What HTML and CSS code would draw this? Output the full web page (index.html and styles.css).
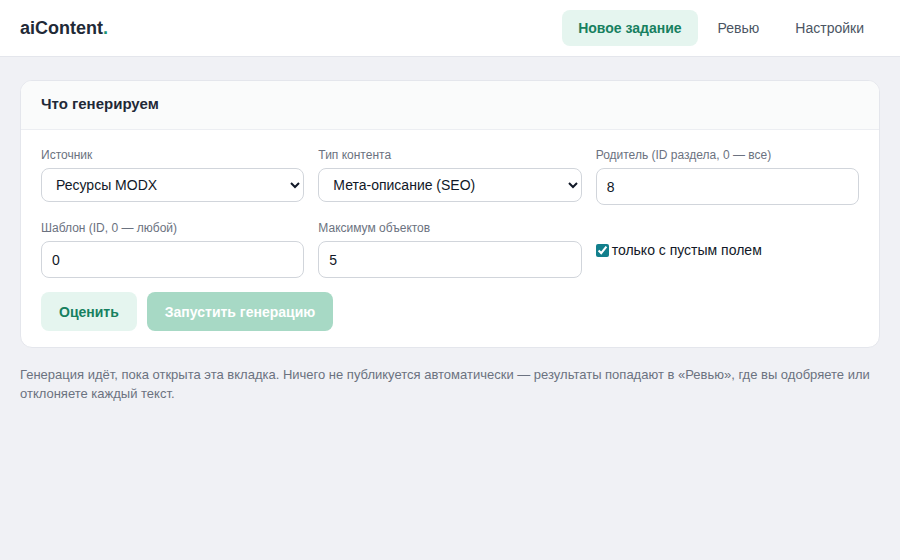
FILE: index.html
```html
<!DOCTYPE html>
<html lang="ru">
<head>
    <meta charset="UTF-8">
    <title>aiContent — Новое задание</title>
    <link rel="stylesheet" href="styles.css">
</head>
<body>
    <header class="topbar">
        <div class="logo">aiContent<span class="logo-dot">.</span></div>
        <nav class="nav">
            <a class="nav-item active" href="#">Новое задание</a>
            <a class="nav-item" href="#">Ревью</a>
            <a class="nav-item" href="#">Настройки</a>
        </nav>
    </header>

    <main class="page">
        <section class="card">
            <div class="card-head">Что генерируем</div>
            <div class="card-body">
                <div class="grid">
                    <div class="field">
                        <label for="source">Источник</label>
                        <select id="source">
                            <option>Ресурсы MODX</option>
                        </select>
                    </div>
                    <div class="field">
                        <label for="type">Тип контента</label>
                        <select id="type">
                            <option>Мета-описание (SEO)</option>
                        </select>
                    </div>
                    <div class="field">
                        <label for="parent">Родитель (ID раздела, 0 — все)</label>
                        <input type="text" id="parent" value="8">
                    </div>
                    <div class="field">
                        <label for="template">Шаблон (ID, 0 — любой)</label>
                        <input type="text" id="template" value="0">
                    </div>
                    <div class="field">
                        <label for="limit">Максимум объектов</label>
                        <input type="text" id="limit" value="5">
                    </div>
                    <div class="field check-field">
                        <label class="check"><input type="checkbox" checked>только с пустым полем</label>
                    </div>
                </div>
                <div class="actions">
                    <button class="btn btn-soft">Оценить</button>
                    <button class="btn btn-primary" disabled>Запустить генерацию</button>
                </div>
            </div>
        </section>

        <p class="hint">Генерация идёт, пока открыта эта вкладка. Ничего не публикуется автоматически — результаты попадают в «Ревью», где вы одобряете или отклоняете каждый текст.</p>
    </main>
</body>
</html>
```

FILE: styles.css
```css
body {
    margin: 0;
    font-family: "Liberation Sans", Arial, sans-serif;
    background: #f0f1f5;
    color: #1f2937;
}

.topbar {
    height: 56px;
    background: #ffffff;
    border-bottom: 1px solid #e4e6ec;
    display: flex;
    align-items: center;
    justify-content: space-between;
    padding: 0 20px;
}

.logo {
    font-size: 18px;
    font-weight: bold;
    color: #1f2a37;
}

.logo-dot {
    color: #1a9473;
}

.nav {
    display: flex;
    gap: 4px;
}

.nav-item {
    height: 36px;
    line-height: 36px;
    padding: 0 16px;
    border-radius: 8px;
    font-size: 14px;
    color: #4b5563;
    text-decoration: none;
}

.nav-item.active {
    background: #e5f5ef;
    color: #17805f;
    font-weight: bold;
}

.page {
    padding: 23px 20px;
}

.card {
    background: #ffffff;
    border: 1px solid #e4e6ec;
    border-radius: 12px;
    overflow: hidden;
}

.card-head {
    height: 48px;
    line-height: 46px;
    padding: 0 20px;
    background: #fafbfb;
    border-bottom: 1px solid #eceef2;
    font-size: 15px;
    font-weight: bold;
    color: #1f2937;
}

.card-body {
    padding: 16px 20px 16px;
}

.grid {
    display: grid;
    grid-template-columns: repeat(3, 1fr);
    column-gap: 14px;
    row-gap: 14px;
}

.field label {
    display: block;
    font-size: 12px;
    line-height: 18px;
    color: #6b7280;
    margin-bottom: 4px;
}

.field input[type="text"],
.field select {
    width: 100%;
    box-sizing: border-box;
    border: 1px solid #d1d5db;
    border-radius: 8px;
    font-family: inherit;
    font-size: 14px;
    color: #111827;
    background: #ffffff;
}

.field input[type="text"] {
    height: 37px;
    padding: 0 10px;
}

.field select {
    height: 34px;
    padding: 0 6px 0 10px;
}

.check-field {
    padding-top: 23px;
}

.field label.check {
    display: flex;
    align-items: center;
    margin: 0;
    font-size: 14px;
    line-height: 17px;
    color: #111827;
}

.check input {
    margin: 0 3px 0 0;
    width: 13px;
    height: 13px;
    accent-color: #127f8c;
}

.actions {
    display: flex;
    gap: 10px;
    margin-top: 14px;
}

.btn {
    height: 39px;
    padding: 0 18px;
    border: none;
    border-radius: 8px;
    font-family: inherit;
    font-size: 14px;
    font-weight: bold;
    cursor: pointer;
}

.btn-soft {
    background: #e5f5ef;
    color: #17805f;
}

.btn-primary {
    background: #a7d9c5;
    color: #ffffff;
}

.btn-primary:disabled {
    cursor: not-allowed;
}

.hint {
    margin: 17px 0 0;
    font-size: 13px;
    line-height: 19px;
    color: #6b7280;
}
```
